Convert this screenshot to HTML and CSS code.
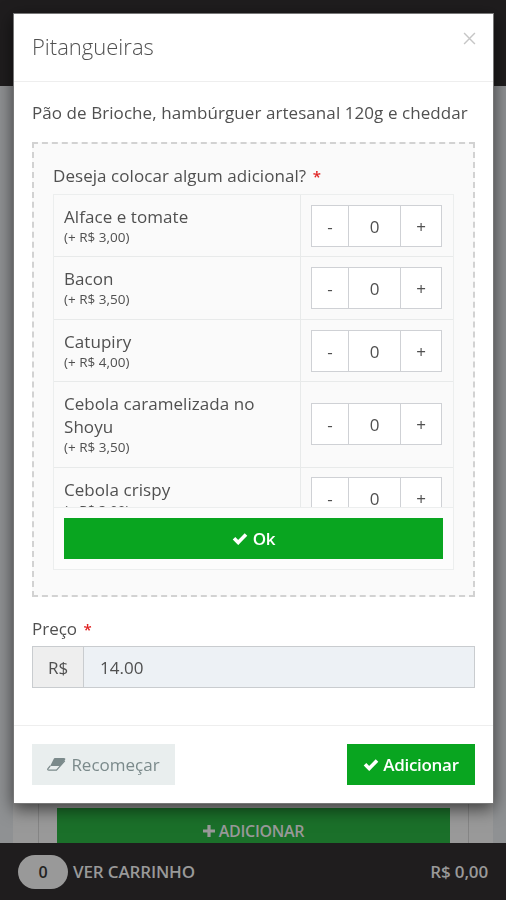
FILE: index.html
```html
<!DOCTYPE html>
<html lang="pt-BR">
<head>
<meta charset="utf-8">
<title>Pitangueiras</title>
<link rel="stylesheet" href="styles.css">
</head>
<body>
<div class="page">
  <header class="topbar"></header>
  <main class="store">
    <div class="product"><div class="add"><svg class="plus" viewBox="0 0 12 12"><path d="M4.4 0h3.2v4.4H12v3.2H7.6V12H4.4V7.6H0V4.4h4.4z"/></svg><span>ADICIONAR</span></div></div>
  </main>
  <footer class="cart"><span class="count">0</span><span class="cart-label">VER CARRINHO</span><span class="total">R$ 0,00</span></footer>
</div>

<div class="modal">
  <div class="modal-header">
    <h4 class="title">Pitangueiras</h4>
    <svg class="close" viewBox="0 0 12 12"><path d="M1 1l10 10M11 1L1 11"/></svg>
  </div>
  <div class="modal-body">
    <p class="description">Pão de Brioche, hambúrguer artesanal 120g e cheddar</p>
    <section class="group">
      <div class="question">Deseja colocar algum adicional? <b class="required">*</b></div>
      <div class="options">
        <div class="list">
          <div class="row"><div class="info"><span class="name">Alface e tomate</span><small>(+ R$ 3,00)</small></div><div class="qty"><div class="stepper"><span>-</span><span>0</span><span>+</span></div></div></div>
          <div class="row"><div class="info"><span class="name">Bacon</span><small>(+ R$ 3,50)</small></div><div class="qty"><div class="stepper"><span>-</span><span>0</span><span>+</span></div></div></div>
          <div class="row"><div class="info"><span class="name">Catupiry</span><small>(+ R$ 4,00)</small></div><div class="qty"><div class="stepper"><span>-</span><span>0</span><span>+</span></div></div></div>
          <div class="row"><div class="info"><span class="name">Cebola caramelizada no Shoyu</span><small>(+ R$ 3,50)</small></div><div class="qty"><div class="stepper"><span>-</span><span>0</span><span>+</span></div></div></div>
          <div class="row"><div class="info"><span class="name">Cebola crispy</span><small>(+ R$ 3,00)</small></div><div class="qty"><div class="stepper"><span>-</span><span>0</span><span>+</span></div></div></div>
        </div>
        <div class="confirm"><div class="button ok"><svg class="check" viewBox="0 0 16 13"><path d="M2 6.3l4.2 4.2L14 2.4"/></svg><span>Ok</span></div></div>
      </div>
    </section>
    <div class="price-label">Preço <b class="required">*</b></div>
    <div class="price"><span class="currency">R$</span><span class="amount">14.00</span></div>
  </div>
  <div class="modal-footer">
    <div class="button reset"><svg class="eraser" viewBox="0 0 19 13"><path class="eraser-fill" d="M7.8 0H17q2 0 1.200 1.800L13.200 8H3.200L6.800.8Q7.200 0 7.800 0z"/><path class="eraser-line" d="M3.200 8L1 10.600Q0 12.200 2 12.200H9.500L17.800 2.800"/></svg><span>Recomeçar</span></div>
    <div class="button submit"><svg class="check" viewBox="0 0 16 13"><path d="M2 6.3l4.2 4.2L14 2.4"/></svg><span>Adicionar</span></div>
  </div>
</div>
</body>
</html>
```

FILE: styles.css
```css
* { box-sizing: border-box; }
body {
  margin: 0;
  height: 900px;
  overflow: hidden;
  font: 17px/23px "Open Sans", sans-serif;
  color: #505050;
}
.page { height: 900px; display: flex; flex-direction: column; background: #8f9193; }
.topbar { height: 86px; background: #1f1d1e; }
.store { flex: 1; padding: 0 13px; display: flex; align-items: flex-end; }
.product {
  width: 100%;
  height: 100%;
  margin: 0 24px 0 25px;
  padding: 0 18px;
  border: solid #858585;
  border-width: 0 1px;
  background: #999;
  display: flex;
  align-items: flex-end;
  box-shadow: -25px 0 #999, 24px 0 #999;
}
.add {
  flex: 1;
  height: 35px;
  padding-top: 11px;
  display: flex;
  align-items: center;
  justify-content: center;
  gap: 4px;
  background: #1b702a;
  color: #999;
  font-size: 16px;
  font-weight: 600;
  letter-spacing: -.3px;
}
.plus { width: 12px; height: 12px; fill: #999; }
.cart {
  height: 57px;
  padding: 0 18px;
  display: flex;
  align-items: center;
  background: #1f1d1e;
  color: #999;
  font-weight: 600;
  letter-spacing: -.15px;
}
.count {
  width: 50px;
  height: 34px;
  margin-right: 5px;
  border-radius: 17px;
  background: #999;
  color: #222;
  font-size: 16px;
  line-height: 34px;
  text-align: center;
}
.total { margin-left: auto; }

.modal {
  position: fixed;
  left: 13px;
  top: 13px;
  width: 481px;
  height: 791px;
  display: flex;
  flex-direction: column;
  background: #fff;
  border: 1px solid #777;
  box-shadow: 0 5px 16px rgba(0, 0, 0, .6);
}
.modal-header {
  height: 68px;
  padding: 17px 17px 0 18px;
  display: flex;
  justify-content: space-between;
  border-bottom: 1px solid #eee;
}
.title { margin: 0; font-size: 22px; line-height: 31px; font-weight: 300; }
.close { width: 13px; height: 13px; margin-top: 1px; stroke: #c6c6c6; stroke-width: 1.3; fill: none; }
.modal-body { flex: 1; padding: 19px 18px 0; }
.description { margin: 0; letter-spacing: .07px; white-space: nowrap; }
.group {
  height: 455px;
  margin-top: 18px;
  padding: 21px 19px 0;
  border: 2px dashed #d2d2d2;
  background: #fafafa;
}
.question { line-height: 22px; letter-spacing: .06px; }
.required { color: #e02222; font-size: 15px; font-weight: 600; margin-left: 2px; }
.options { height: 376px; margin-top: 7px; border: 1px solid #eceeee; }
.list { height: 312px; overflow: hidden; }
.row { display: flex; border-bottom: 1px solid #e8eaea; }
.info { width: 247px; padding: 10px; border-right: 1px solid #e8eaea; }
.name { display: block; line-height: 23px; letter-spacing: .06px; }
.info small { display: block; font-size: 13.5px; line-height: 18.4px; }
.qty { flex: 1; display: flex; align-items: center; padding-left: 10px; }
.stepper {
  width: 131px;
  height: 42px;
  display: grid;
  grid-template-columns: 36px 52px 1fr;
  background: #fff;
  border: 1px solid #cfd1d5;
  line-height: 41px;
  text-align: center;
}
.stepper span + span { border-left: 1px solid #cfd1d5; }
.confirm { height: 62px; padding: 10px 10px 0; border-top: 1px solid #eceeee; background: #fcfcfc; }
.button { height: 41px; display: flex; align-items: center; justify-content: center; }
.ok, .submit { background: #09a520; color: #fff; font-weight: 600; letter-spacing: -.3px; }
.ok { gap: 5px; }
.check { width: 16px; height: 13px; stroke: #fff; stroke-width: 3.6; fill: none; }
.price-label { margin-top: 20px; }
.price { height: 42px; margin-top: 5px; display: flex; border: 1px solid #c9cccf; line-height: 41px; }
.currency { width: 51px; text-align: center; background: #eee; border-right: 1px solid #c9cccf; }
.amount { flex: 1; padding-left: 16px; background: #edf1f5; }
.modal-footer {
  height: 78px;
  padding: 18px 18px 0;
  display: flex;
  justify-content: space-between;
  border-top: 1px solid #eee;
}
.reset { width: 143px; gap: 5px; background: #e9eeee; color: #7b8a8b; }
.submit { width: 128px; gap: 4px; }
.eraser { width: 19px; height: 13px; }
.eraser-fill { fill: #7b8a8b; }
.eraser-line { fill: none; stroke: #7b8a8b; stroke-width: 1.2; }
```
